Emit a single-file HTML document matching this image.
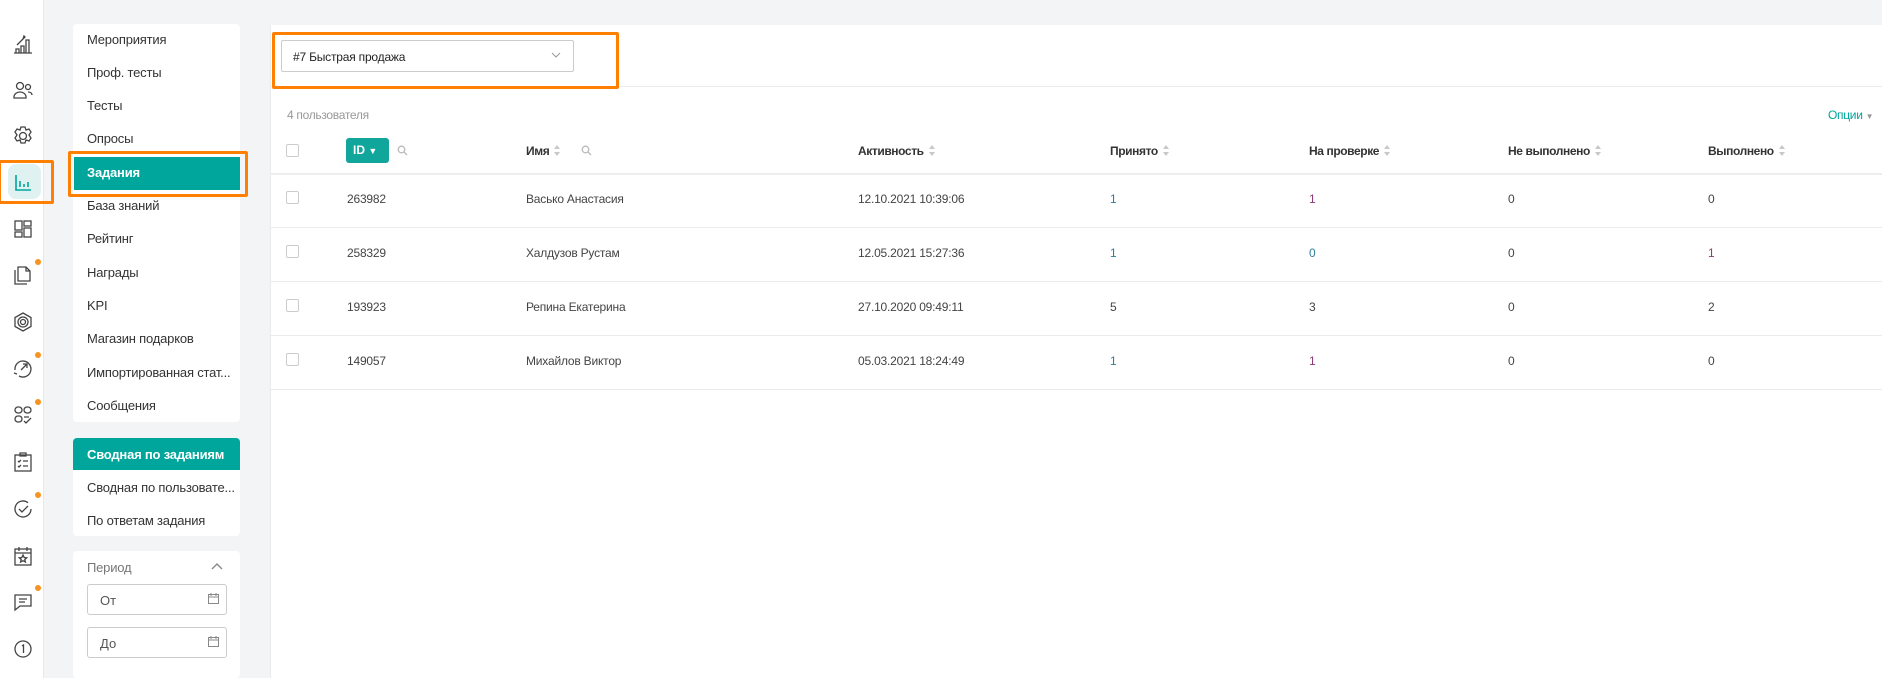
<!DOCTYPE html>
<html><head><meta charset="utf-8"><style>
*{box-sizing:border-box;margin:0;padding:0}
body{width:1882px;height:678px;background:#f3f4f6;font-family:"Liberation Sans",sans-serif;font-size:13px;color:#333;position:relative;overflow:hidden}
.abs{position:absolute}
.side{left:0;top:0;width:44px;height:678px;background:#fff;border-right:1px solid #e8e8ea}
.ic{position:absolute;left:11px;width:24px;height:24px}
.dot{position:absolute;width:6px;height:6px;border-radius:50%;background:#f7931e}
.panel{background:#fff;border-radius:4px}
.mi{position:absolute;left:87px;font-size:13px;color:#333;line-height:16px;letter-spacing:-0.2px}
.act{background:#00a69c;color:#fff}
.ob{position:absolute;border:3px solid #ff8000;border-radius:2px}
.th{position:absolute;top:144px;font-weight:bold;font-size:12px;color:#333;letter-spacing:-0.4px}
.td{position:absolute;font-size:12px;color:#444;letter-spacing:-0.2px}
.cb{position:absolute;left:286px;width:13px;height:13px;border:1px solid #ccc;border-radius:2px;background:#fff}
.hr{position:absolute;left:270px;right:0;height:1px;background:#ebebeb}
.sort{display:inline-block;width:7px;height:11px;vertical-align:-1px;margin-left:5px;position:relative}
.sort:before{content:"";position:absolute;left:0;top:0;border:3.5px solid transparent;border-bottom:4px solid #c8c8c8;border-top:0}
.sort:after{content:"";position:absolute;left:0;bottom:0;border:3.5px solid transparent;border-top:4px solid #c8c8c8;border-bottom:0}
.inp{position:absolute;left:87px;width:140px;height:31px;border:1px solid #ccc;border-radius:3px;font-size:13px;color:#555;padding:8px 0 0 12px}
</style></head><body>
<div class="abs side"></div>
<svg class="ic" style="top:32px" viewBox="0 0 24 24" fill="none" stroke="#444" stroke-width="1.3"><path d="M3 21h18M5 21v-4h3v4M10 21v-7h3v7M15 21V8h3v13M6 13l6-6M12 7l1-3 1 1z"/></svg>
<svg class="ic" style="top:78px" viewBox="0 0 24 24" fill="none" stroke="#444" stroke-width="1.3"><circle cx="9" cy="8" r="3.5"/><path d="M3 19c0-3 3-5 6-5s6 2 6 5v1H3z"/><circle cx="17" cy="9" r="2.5"/><path d="M17 14c2 0 4 1 4 3"/></svg>
<svg class="ic" style="top:124px" viewBox="0 0 24 24" fill="none" stroke="#444" stroke-width="1.3"><circle cx="12" cy="12" r="3.5"/><path d="M10 3h4l1 3 3-1 2 3-2 3 2 3-2 3-3-1-1 3h-4l-1-3-3 1-2-3 2-3-2-3 2-3 3 1z"/></svg>
<div class="abs" style="left:8px;top:164px;width:33px;height:35px;background:#dff2f1;border-radius:8px"></div>
<svg class="ic" style="top:170px" viewBox="0 0 24 24" fill="none" stroke="#00a69c" stroke-width="1.6"><path d="M5 5v15h15M9 11v6M13 14v3M17 12v5"/></svg>
<div class="ob" style="left:-2px;top:160px;width:56px;height:44px"></div>
<svg class="ic" style="top:217px" viewBox="0 0 24 24" fill="none" stroke="#444" stroke-width="1.3"><rect x="4" y="4" width="7" height="9"/><rect x="4" y="15" width="7" height="5"/><rect x="13" y="4" width="7" height="5"/><rect x="13" y="11" width="7" height="9"/></svg>
<svg class="ic" style="top:263px" viewBox="0 0 24 24" fill="none" stroke="#444" stroke-width="1.3"><path d="M7 4h8l4 4v10H7zM15 4v4h4M4 7v14h12"/></svg>
<div class="dot" style="left:35px;top:259px"></div>
<svg class="ic" style="top:310px" viewBox="0 0 24 24" fill="none" stroke="#444" stroke-width="1.3"><path d="M12 3l8 4.5v9L12 21l-8-4.5v-9z"/><circle cx="12" cy="12" r="5"/><circle cx="12" cy="12" r="2.5"/></svg>
<svg class="ic" style="top:356px" viewBox="0 0 24 24" fill="none" stroke="#444" stroke-width="1.3"><path d="M4 14a8 8 0 1 1 4 6M10 14l6-6M12 8h4v4M3 17l3 1"/></svg>
<div class="dot" style="left:35px;top:352px"></div>
<svg class="ic" style="top:403px" viewBox="0 0 24 24" fill="none" stroke="#444" stroke-width="1.3"><rect x="4" y="4" width="7" height="6" rx="3"/><rect x="13" y="4" width="7" height="6" rx="3"/><rect x="4" y="13" width="7" height="6" rx="3"/><path d="M13 14h5M13 18l2 2 5-5"/></svg>
<div class="dot" style="left:35px;top:399px"></div>
<svg class="ic" style="top:450px" viewBox="0 0 24 24" fill="none" stroke="#444" stroke-width="1.3"><rect x="4" y="5" width="16" height="16"/><path d="M9 3h6v3H9zM7 11l1 1 2-2M12 11h5M7 16l1 1 2-2M12 16h5"/></svg>
<svg class="ic" style="top:497px" viewBox="0 0 24 24" fill="none" stroke="#444" stroke-width="1.3"><path d="M20 12a8 8 0 1 1-3-6.3M8 12l3 3 6-6"/></svg>
<div class="dot" style="left:35px;top:492px"></div>
<svg class="ic" style="top:544px" viewBox="0 0 24 24" fill="none" stroke="#444" stroke-width="1.3"><rect x="4" y="5" width="16" height="16"/><path d="M4 9h16M8 3v4M16 3v4M12 11l1.2 2.5 2.5.3-1.9 1.7.6 2.5-2.4-1.3-2.4 1.3.6-2.5-1.9-1.7 2.5-.3z"/></svg>
<svg class="ic" style="top:590px" viewBox="0 0 24 24" fill="none" stroke="#444" stroke-width="1.3"><path d="M4 5h16v11H9l-5 4zM8 9h8M8 12h6"/></svg>
<div class="dot" style="left:35px;top:585px"></div>
<svg class="ic" style="top:637px" viewBox="0 0 24 24" fill="none" stroke="#444" stroke-width="1.3"><circle cx="12" cy="12" r="8"/><path d="M11 9l1.5-1v8"/></svg>

<div class="abs panel" style="left:73px;top:24px;width:167px;height:398px"></div>
<div class="abs act" style="left:74px;top:157px;width:166px;height:33px"></div>
<div class="ob" style="left:68px;top:151px;width:180px;height:46px"></div>
<div class="mi" style="top:32px">Мероприятия</div>
<div class="mi" style="top:65px">Проф. тесты</div>
<div class="mi" style="top:98px">Тесты</div>
<div class="mi" style="top:131px">Опросы</div>
<div class="mi" style="top:165px;color:#fff;font-weight:bold">Задания</div>
<div class="mi" style="top:198px">База знаний</div>
<div class="mi" style="top:231px">Рейтинг</div>
<div class="mi" style="top:265px">Награды</div>
<div class="mi" style="top:298px">KPI</div>
<div class="mi" style="top:331px">Магазин подарков</div>
<div class="mi" style="top:365px">Импортированная стат...</div>
<div class="mi" style="top:398px">Сообщения</div>

<div class="abs panel" style="left:73px;top:438px;width:167px;height:98px;overflow:hidden"><div class="act" style="height:32px"></div></div>
<div class="mi" style="top:447px;color:#fff;font-weight:bold">Сводная по заданиям</div>
<div class="mi" style="top:480px">Сводная по пользовате...</div>
<div class="mi" style="top:513px">По ответам задания</div>

<div class="abs panel" style="left:73px;top:551px;width:167px;height:127px"></div>
<div class="mi" style="top:560px;color:#777">Период</div>
<svg class="abs" style="left:210px;top:561px" width="14" height="10" viewBox="0 0 14 10" fill="none" stroke="#888" stroke-width="1.4"><path d="M2 8l5-5 5 5"/></svg>
<div class="inp" style="top:584px">От</div>
<div class="inp" style="top:627px">До</div>
<svg class="abs" style="left:207px;top:592px" width="13" height="13" viewBox="0 0 13 13" fill="none" stroke="#888"><rect x="1.5" y="2.5" width="10" height="9"/><path d="M1.5 5h10M4 1v3M9 1v3"/></svg>
<svg class="abs" style="left:207px;top:635px" width="13" height="13" viewBox="0 0 13 13" fill="none" stroke="#888"><rect x="1.5" y="2.5" width="10" height="9"/><path d="M1.5 5h10M4 1v3M9 1v3"/></svg>

<div class="abs" style="left:270px;top:25px;right:0;height:653px;background:#fff;border-left:1px solid #ebebeb"></div>
<div class="hr" style="top:86px"></div>
<div class="abs" style="left:281px;top:40px;width:293px;height:32px;border:1px solid #ccc;border-radius:2px;padding:9px 0 0 11px;font-size:12px;color:#222;letter-spacing:-0.2px">#7 Быстрая продажа</div>
<svg class="abs" style="left:551px;top:52px" width="10" height="7" viewBox="0 0 10 7" fill="none" stroke="#999"><path d="M1 1l4 4 4-4"/></svg>
<div class="ob" style="left:272px;top:32px;width:347px;height:57px"></div>
<div class="abs" style="left:287px;top:108px;color:#999;font-size:12px;letter-spacing:-0.3px">4 пользователя</div>
<div class="abs" style="left:1828px;top:108px;color:#00a69c;font-size:12px;letter-spacing:-0.3px">Опции <span style="font-size:8px;color:#999">▼</span></div>

<div class="cb" style="top:144px"></div>
<div class="abs" style="left:346px;top:138px;width:43px;height:25px;background:#10a69c;border-radius:3px;color:#fff;font-weight:bold;padding:5px 0 0 7px;font-size:12px">ID <span style="font-size:9px">▼</span></div>
<svg class="abs" style="left:397px;top:145px" width="11" height="11" viewBox="0 0 11 11" fill="none" stroke="#bbb" stroke-width="1.3"><circle cx="4.5" cy="4.5" r="3.3"/><path d="M7 7l3 3"/></svg>
<div class="th" style="left:526px">Имя<span class="sort"></span></div>
<svg class="abs" style="left:581px;top:145px" width="11" height="11" viewBox="0 0 11 11" fill="none" stroke="#bbb" stroke-width="1.3"><circle cx="4.5" cy="4.5" r="3.3"/><path d="M7 7l3 3"/></svg>
<div class="th" style="left:858px">Активность<span class="sort"></span></div>
<div class="th" style="left:1110px">Принято<span class="sort"></span></div>
<div class="th" style="left:1309px">На проверке<span class="sort"></span></div>
<div class="th" style="left:1508px">Не выполнено<span class="sort"></span></div>
<div class="th" style="left:1708px">Выполнено<span class="sort"></span></div>
<div class="hr" style="top:173px;height:2px;background:#eee"></div>

<div class="cb" style="top:191px"></div><div class="td" style="left:347px;top:192px">263982</div><div class="td" style="left:526px;top:192px">Васько Анастасия</div><div class="td" style="left:858px;top:192px">12.10.2021 10:39:06</div><div class="td" style="left:1110px;top:192px;color:#2f7f99">1</div><div class="td" style="left:1309px;top:192px;color:#8a3c78">1</div><div class="td" style="left:1508px;top:192px">0</div><div class="td" style="left:1708px;top:192px">0</div>
<div class="hr" style="top:227px"></div>
<div class="cb" style="top:245px"></div><div class="td" style="left:347px;top:246px">258329</div><div class="td" style="left:526px;top:246px">Халдузов Рустам</div><div class="td" style="left:858px;top:246px">12.05.2021 15:27:36</div><div class="td" style="left:1110px;top:246px;color:#2f7f99">1</div><div class="td" style="left:1309px;top:246px;color:#2f7f99">0</div><div class="td" style="left:1508px;top:246px">0</div><div class="td" style="left:1708px;top:246px;color:#8a3c78">1</div>
<div class="hr" style="top:281px"></div>
<div class="cb" style="top:299px"></div><div class="td" style="left:347px;top:300px">193923</div><div class="td" style="left:526px;top:300px">Репина Екатерина</div><div class="td" style="left:858px;top:300px">27.10.2020 09:49:11</div><div class="td" style="left:1110px;top:300px">5</div><div class="td" style="left:1309px;top:300px">3</div><div class="td" style="left:1508px;top:300px">0</div><div class="td" style="left:1708px;top:300px">2</div>
<div class="hr" style="top:335px"></div>
<div class="cb" style="top:353px"></div><div class="td" style="left:347px;top:354px">149057</div><div class="td" style="left:526px;top:354px">Михайлов Виктор</div><div class="td" style="left:858px;top:354px">05.03.2021 18:24:49</div><div class="td" style="left:1110px;top:354px;color:#2f7f99">1</div><div class="td" style="left:1309px;top:354px;color:#8a3c78">1</div><div class="td" style="left:1508px;top:354px">0</div><div class="td" style="left:1708px;top:354px">0</div>
<div class="hr" style="top:389px"></div>
</body></html>
